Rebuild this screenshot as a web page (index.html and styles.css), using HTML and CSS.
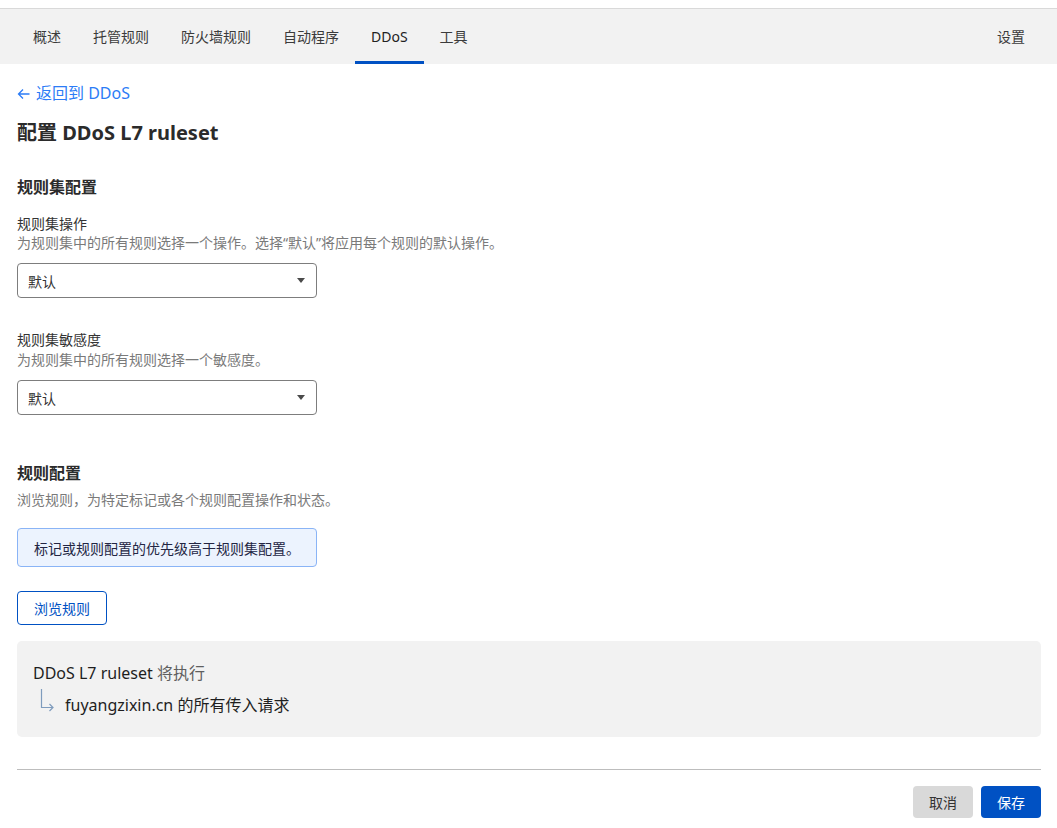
FILE: index.html
```html
<!DOCTYPE html>
<html lang="zh-CN">
<head>
<meta charset="utf-8">
<title>配置 DDoS L7 ruleset</title>
<link rel="stylesheet" href="styles.css">
</head>
<body>
<div class="topgap"></div>
<nav class="tabs">
  <div class="tab-list">
    <a class="tab">概述</a>
    <a class="tab">托管规则</a>
    <a class="tab">防火墙规则</a>
    <a class="tab">自动程序</a>
    <a class="tab active">DDoS</a>
    <a class="tab">工具</a>
  </div>
  <a class="tab">设置</a>
</nav>
<main class="content">
  <a class="back">
    <svg class="back-icon" width="13" height="14" viewBox="0 0 13 14"><path d="M12.5 7H1.5M6 2.5L1.5 7L6 11.5" fill="none" stroke="currentColor" stroke-width="1.3"/></svg>
    <span>返回到 DDoS</span>
  </a>
  <h1 class="title">配置 DDoS L7 ruleset</h1>

  <h2 class="section-title first">规则集配置</h2>
  <div class="field">
    <div class="label">规则集操作</div>
    <div class="desc">为规则集中的所有规则选择一个操作。选择“默认”将应用每个规则的默认操作。</div>
    <div class="select"><span>默认</span><span class="caret"></span></div>
  </div>
  <div class="field second">
    <div class="label">规则集敏感度</div>
    <div class="desc">为规则集中的所有规则选择一个敏感度。</div>
    <div class="select"><span>默认</span><span class="caret"></span></div>
  </div>

  <h2 class="section-title rules">规则配置</h2>
  <div class="desc section-desc">浏览规则，为特定标记或各个规则配置操作和状态。</div>
  <div class="info">标记或规则配置的优先级高于规则集配置。</div>
  <button class="btn-outline">浏览规则</button>

  <div class="summary">
    <div class="summary-line">DDoS L7 ruleset <span class="muted">将执行</span></div>
    <div class="summary-sub">
      <svg class="sub-icon" width="14" height="23" viewBox="0 0 14 23"><path d="M1.5 0V18.5H13M9.5 15L13 18.5L9.5 22" fill="none" stroke="#7f9cbd" stroke-width="1.2"/></svg>
      <span>fuyangzixin.cn 的所有传入请求</span>
    </div>
  </div>

  <div class="footer">
    <button class="btn btn-gray">取消</button>
    <button class="btn btn-primary">保存</button>
  </div>
</main>
</body>
</html>
```

FILE: styles.css
```css
html, body {
  margin: 0;
  padding: 0;
  background: #fff;
  color: #313131;
  font-family: "Segoe UI", "Noto Sans", "Noto Sans CJK SC", sans-serif;
}

.topgap {
  height: 8px;
  border-bottom: 1px solid #d9d9d9;
}

.tabs {
  display: flex;
  justify-content: space-between;
  background: #f2f2f2;
  height: 55px;
  padding: 0 16px 0 17px;
}

.tab-list {
  display: flex;
}

.tab {
  display: flex;
  align-items: center;
  padding: 2px 16px 0;
  font-size: 14px;
  color: #3b3b3b;
  border-bottom: 3px solid transparent;
  box-sizing: border-box;
  height: 55px;
}

.tab.active {
  border-bottom-color: #0051c3;
  color: #222;
}

.content {
  padding: 0 16px 0 17px;
}

.back {
  display: flex;
  align-items: center;
  gap: 6px;
  color: #2c7cf6;
  font-size: 16px;
  line-height: 20px;
  margin-top: 19px;
  height: 20px;
}

.back-icon {
  margin-top: 1px;
}

.title {
  font-size: 20px;
  font-weight: 700;
  color: #2b2b2b;
  margin: 18px 0 0;
  line-height: 24px;
}

.section-title {
  font-size: 16px;
  font-weight: 700;
  color: #2b2b2b;
  margin: 0;
  line-height: 20px;
}

.section-title.first {
  margin-top: 32px;
}

.section-title.rules {
  margin-top: 48px;
}

.field {
  margin-top: 17px;
}

.field.second {
  margin-top: 32px;
}

.label {
  font-size: 14px;
  color: #333;
  line-height: 19px;
}

.desc {
  font-size: 14px;
  color: #7a7a7a;
  line-height: 20px;
}

.field.second .desc {
  margin-top: 1px;
}

.select {
  display: flex;
  align-items: center;
  justify-content: space-between;
  width: 300px;
  height: 35px;
  box-sizing: border-box;
  margin-top: 10px;
  border: 1px solid #7d7d7d;
  border-radius: 4px;
  padding: 0 11px 0 10px;
  font-size: 14px;
  color: #333;
}

.caret {
  width: 0;
  height: 0;
  border-left: 4.5px solid transparent;
  border-right: 4.5px solid transparent;
  border-top: 5px solid #4a4a4a;
}

.section-desc {
  margin-top: 7px;
}

.info {
  width: 300px;
  height: 39px;
  box-sizing: border-box;
  margin-top: 18px;
  background: #ecf3fe;
  border: 1px solid #8ab4f6;
  border-radius: 4px;
  font-size: 14px;
  color: #232543;
  display: flex;
  align-items: center;
  padding-left: 16px;
}

.btn-outline {
  display: block;
  margin-top: 24px;
  width: 90px;
  height: 34px;
  background: #fff;
  border: 1px solid #0051c3;
  border-radius: 4px;
  color: #0051c3;
  font-size: 14px;
  font-family: inherit;
  padding: 0;
}

.summary {
  margin-top: 16px;
  background: #f2f2f2;
  border-radius: 5px;
  height: 96px;
  box-sizing: border-box;
  padding: 20px 16px 0;
}

.summary-line {
  font-size: 16px;
  color: #1e1e1e;
  line-height: 24px;
}

.muted {
  color: #5f5f5f;
}

.summary-sub {
  display: flex;
  align-items: flex-start;
  gap: 11px;
  margin-left: 7px;
  margin-top: 8px;
  font-size: 16px;
  color: #1e1e1e;
  line-height: 24px;
}

.sub-icon {
  margin-top: -4px;
}

.footer {
  margin-top: 32px;
  border-top: 1px solid #bdbdbd;
  display: flex;
  justify-content: flex-end;
  gap: 8px;
  padding-top: 16px;
}

.btn {
  width: 60px;
  height: 32px;
  border: none;
  border-radius: 4px;
  font-size: 14px;
  font-family: inherit;
  padding: 0;
}

.btn-gray {
  background: #d9d9d9;
  color: #333;
}

.btn-primary {
  background: #0051c3;
  color: #fff;
}
```
